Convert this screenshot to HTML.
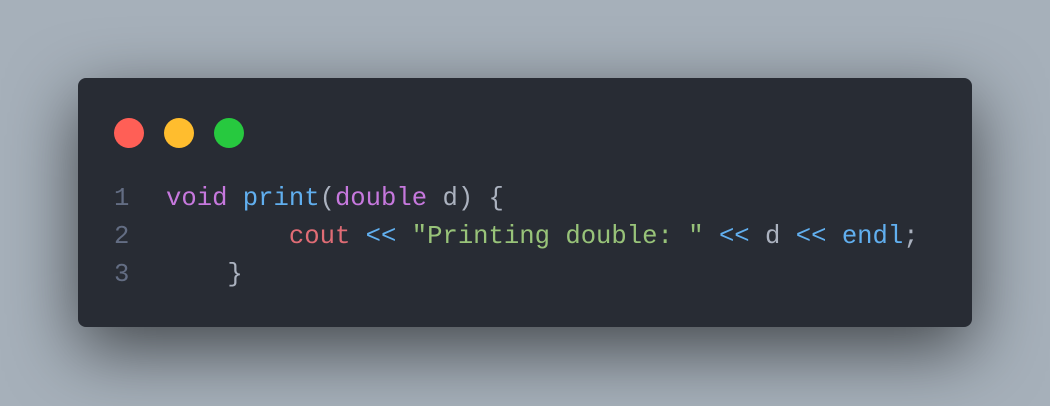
<!DOCTYPE html>
<html><head><style>
html,body{margin:0;padding:0;width:1050px;height:406px;overflow:hidden;background:#a6b0ba;}
.card{position:absolute;left:78px;top:78px;width:894px;height:249px;background:#282c34;border-radius:8px;box-shadow:0 22px 70px rgba(0,0,0,0.6);}
.dot{position:absolute;top:40px;width:30px;height:30px;border-radius:50%;}
.code{position:absolute;left:0;top:102px;font-family:"Liberation Mono",monospace;font-size:25.6px;line-height:38px;color:#abb2bf;white-space:pre;}
.ln{display:inline-block;width:88px;text-align:left;padding-left:36px;box-sizing:border-box;color:#636d83;}
.k{color:#c678dd}.f{color:#61afef}.r{color:#e06c75}.s{color:#98c379}
</style></head><body>
<div class="card">
<div class="dot" style="left:36px;background:#ff5f56"></div>
<div class="dot" style="left:86px;background:#ffbd2e"></div>
<div class="dot" style="left:136px;background:#27c93f"></div>
<div class="code"><div><span class="ln">1</span><span class="k">void</span> <span class="f">print</span>(<span class="k">double</span> d) {</div><div><span class="ln">2</span>        <span class="r">cout</span> <span class="f">&lt;&lt;</span> <span class="s">"Printing double: "</span> <span class="f">&lt;&lt;</span> d <span class="f">&lt;&lt;</span> <span class="f">endl</span>;</div><div><span class="ln">3</span>    }</div></div>
</div>
</body></html>
